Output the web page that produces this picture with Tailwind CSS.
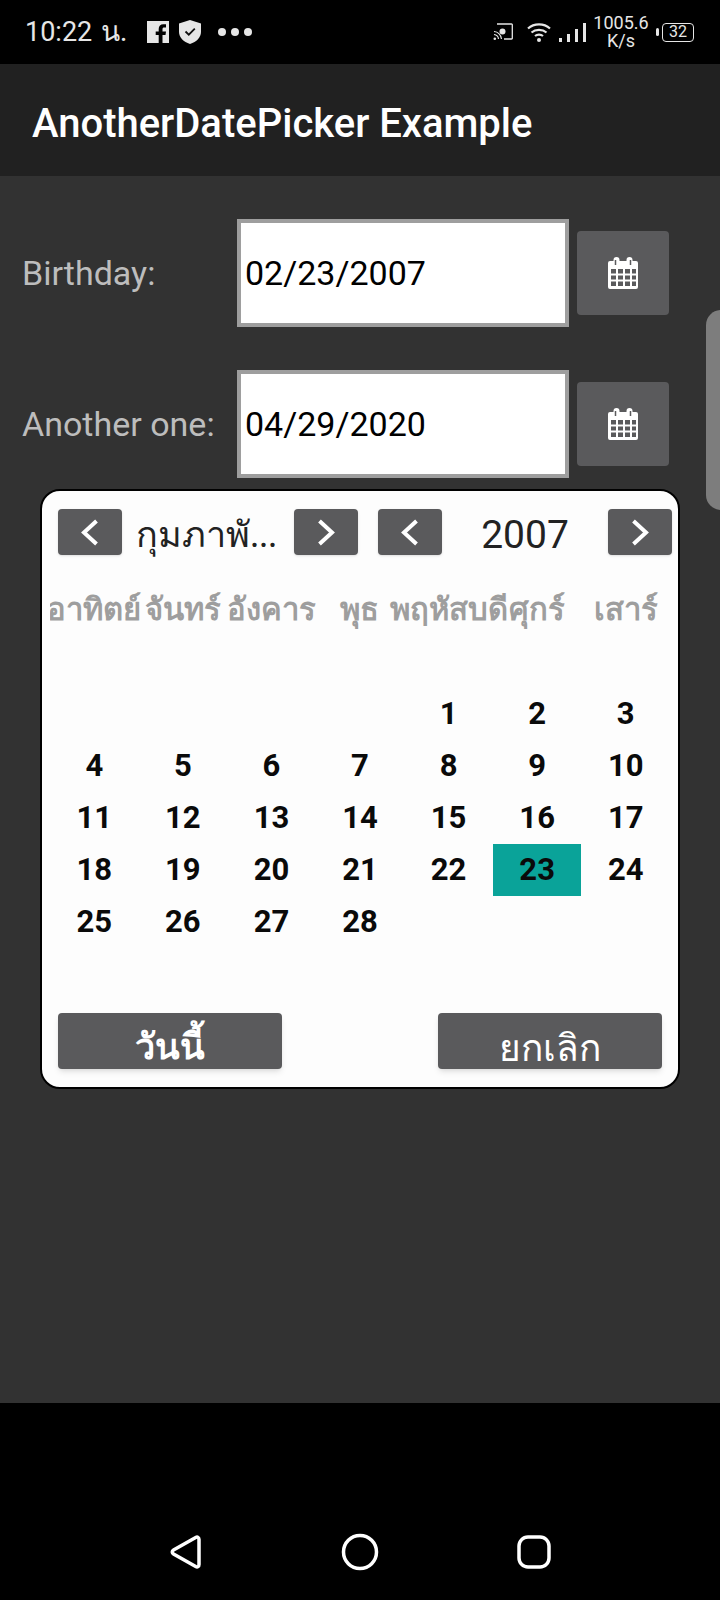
<!DOCTYPE html>
<html lang="th">
<head>
<meta charset="utf-8">
<title>AnotherDatePicker Example</title>
<script src="https://cdn.jsdelivr.net/npm/@tailwindcss/browser@4"></script>
</head>
<body class="bg-black">
<div class="relative flex h-[1600px] w-[720px] flex-col overflow-hidden bg-black font-['Roboto','Noto_Sans',sans-serif]">

  <!-- status bar -->
  <div class="flex h-16 shrink-0 items-center bg-black text-[#e6e6e6]">
    <span class="ml-[25px] w-[122px] whitespace-nowrap text-[27px]">10:22 <span class="ml-[2px] font-['Liberation_Serif',serif] text-[28px]">น.</span></span>
    <svg class="h-[22px] w-[22px]" viewBox="0 0 22 22"><path fill="#e6e6e6" d="M0 0h22v22h-6.500v-8h3l.5-3.600h-3.500V8.300c0-1 .4-1.700 1.800-1.700H19V3.300c-.4 0-1.500-.1-2.700-.1-2.800 0-4.600 1.600-4.600 4.700v2.500H8.700V14h3v8H0z"/></svg>
    <svg class="ml-[10px] h-6 w-[22px]" viewBox="0 0 22 24"><path fill="#e6e6e6" d="M11 0l11 3.400v8.400c0 5.600-4.400 10.200-11 12.200C4.400 22 0 17.400 0 11.800V3.400z"/><path fill="none" stroke="#111" stroke-width="1.800" d="M6.500 11.500l3.300 3.200 6-6"/></svg>
    <div class="ml-[17px] flex gap-[5px]">
      <span class="h-2 w-2 rounded-full bg-[#e6e6e6]"></span>
      <span class="h-2 w-2 rounded-full bg-[#e6e6e6]"></span>
      <span class="h-2 w-2 rounded-full bg-[#e6e6e6]"></span>
    </div>
    <div class="ml-auto flex items-center pr-[26px]">
      <svg class="h-[18px] w-5" viewBox="0 0 20 18"><path fill="none" stroke="#e6e6e6" stroke-width="1.300" d="M4 1h14.500a.8.800 0 0 1 .8.800v13.400a.8.800 0 0 1-.8.800H11"/><path fill="none" stroke="#e6e6e6" stroke-width="1.200" d="M1 8.500a8 8 0 0 1 7.500 7.500M1 11.500a5 5 0 0 1 4.500 4.500"/><circle cx="1.800" cy="15.700" r="1.300" fill="#e6e6e6"/><circle cx="9.500" cy="8.500" r="3" fill="#e6e6e6"/></svg>
      <svg class="ml-[14px] h-5 w-6" viewBox="0 0 24 20"><g fill="none" stroke="#e6e6e6" stroke-width="2.200"><path d="M1 6.500C7 1 17 1 23 6.500"/><path d="M4.500 10.500C8.500 7 15.500 7 19.500 10.500"/><path d="M8 14c2.200-1.800 5.800-1.800 8 0"/></g><circle cx="12" cy="18" r="2" fill="#e6e6e6"/></svg>
      <div class="ml-2 flex h-[19px] items-end gap-[5px]">
        <span class="h-1 w-[3px] bg-[#e6e6e6]"></span>
        <span class="h-2 w-[3px] bg-[#e6e6e6]"></span>
        <span class="h-[13px] w-[3px] bg-[#e6e6e6]"></span>
        <span class="h-[19px] w-[3px] bg-[#e6e6e6]"></span>
      </div>
      <div class="ml-2 mr-px flex w-[54px] flex-col items-center whitespace-nowrap text-[18px] leading-[18px]">
        <span>1005.6</span>
        <span>K/s</span>
      </div>
      <span class="ml-[7px] h-2 w-[3px] rounded-sm bg-[#e6e6e6]"></span>
      <span class="ml-[3px] flex h-[19px] w-8 items-center justify-center rounded-[4px] border-[1.5px] border-[#e6e6e6] text-[16px]">32</span>
    </div>
  </div>

  <!-- app bar -->
  <div class="flex h-28 shrink-0 items-center bg-[#212121] pl-8 pt-2 text-[40px] font-medium text-white">AnotherDatePicker Example</div>

  <!-- main form -->
  <div class="flex flex-1 flex-col gap-[43px] bg-[#323232] pt-[43px]">
    <div class="flex h-[108px] items-center">
      <span class="w-[237px] pl-[22px] text-[34px] text-[#bdbdbd]">Birthday:</span>
      <div class="flex h-[108px] w-[332px] items-center border-4 border-[#9e9e9e] bg-white pl-1 text-[34px] text-black">02/23/2007</div>
      <button class="ml-2 flex h-[84px] w-[92px] items-center justify-center rounded-[4px] bg-[#5a5a5c]">
        <svg class="h-8 w-[30px]" viewBox="0 0 30 32"><use href="#cal"/></svg>
      </button>
    </div>
    <div class="flex h-[108px] items-center">
      <span class="w-[237px] pl-[22px] text-[34px] text-[#bdbdbd]">Another one:</span>
      <div class="flex h-[108px] w-[332px] items-center border-4 border-[#9e9e9e] bg-white pl-1 text-[34px] text-black">04/29/2020</div>
      <button class="ml-2 flex h-[84px] w-[92px] items-center justify-center rounded-[4px] bg-[#5a5a5c]">
        <svg class="h-8 w-[30px]" viewBox="0 0 30 32"><use href="#cal"/></svg>
      </button>
    </div>
  </div>

  <!-- nav bar -->
  <div class="flex h-[197px] shrink-0 items-start justify-center bg-black pt-[130px]">
    <svg class="h-[38px] w-[38px]" viewBox="0 0 38 38"><path fill="none" stroke="#fff" stroke-width="3.500" stroke-linejoin="round" d="M32 6.500c0-2-1.500-3-3.300-2L6.500 17c-1.700 1-1.700 3 0 4l22.200 12.500c1.800 1 3.300 0 3.300-2z"/></svg>
    <svg class="ml-[136px] h-[38px] w-[38px]" viewBox="0 0 38 38"><circle cx="19" cy="19" r="16.500" fill="none" stroke="#fff" stroke-width="3.500"/></svg>
    <svg class="ml-[136px] h-[38px] w-[38px]" viewBox="0 0 38 38"><rect x="4" y="4" width="30" height="30" rx="9" fill="none" stroke="#fff" stroke-width="3.500"/></svg>
  </div>

  <!-- side handle -->
  <div class="absolute left-[706px] top-[310px] h-[200px] w-[30px] rounded-[26px] bg-[#7d7d7d]"></div>

  <!-- date picker dialog -->
  <div class="absolute left-[40px] top-[489px] flex h-[600px] w-[640px] flex-col rounded-[20px] border-2 border-black bg-[#fdfdfd] pt-[18px]">
    <div class="flex h-[46px] items-center pl-4">
      <button class="flex h-[46px] w-16 items-center justify-center rounded-[4px] bg-[#5a5a5c] shadow-sm"><svg class="h-[27px] w-[18px]" viewBox="0 0 18 27"><path fill="none" stroke="#fff" stroke-width="4" d="M15.500 2L3 13.500 15.500 25"/></svg></button>
      <span class="w-[172px] whitespace-nowrap pl-[14px] pt-[6px] font-['Liberation_Serif',serif] text-[36px] leading-[46px] text-[#222]">กุมภาพั...</span>
      <button class="flex h-[46px] w-16 items-center justify-center rounded-[4px] bg-[#5a5a5c] shadow-sm"><svg class="h-[27px] w-[18px]" viewBox="0 0 18 27"><path fill="none" stroke="#fff" stroke-width="4" d="M2.500 2L15 13.500 2.500 25"/></svg></button>
      <button class="ml-5 flex h-[46px] w-16 items-center justify-center rounded-[4px] bg-[#5a5a5c] shadow-sm"><svg class="h-[27px] w-[18px]" viewBox="0 0 18 27"><path fill="none" stroke="#fff" stroke-width="4" d="M15.500 2L3 13.500 15.500 25"/></svg></button>
      <span class="w-[166px] pt-[6px] text-center text-[39px] leading-[46px] text-[#222]">2007</span>
      <button class="flex h-[46px] w-16 items-center justify-center rounded-[4px] bg-[#5a5a5c] shadow-sm"><svg class="h-[27px] w-[18px]" viewBox="0 0 18 27"><path fill="none" stroke="#fff" stroke-width="4" d="M2.500 2L15 13.500 2.500 25"/></svg></button>
    </div>

    <div class="mx-2 mt-[29px] grid h-[52px] grid-cols-7 items-center overflow-hidden font-['Liberation_Serif',serif] text-[31px] font-bold text-[#9e9e9e]">
      <span class="flex justify-center whitespace-nowrap">อาทิตย์</span>
      <span class="flex justify-center whitespace-nowrap">จันทร์</span>
      <span class="flex justify-center whitespace-nowrap">อังคาร</span>
      <span class="flex justify-center whitespace-nowrap">พุธ</span>
      <span class="flex justify-center whitespace-nowrap">พฤหัสบดี</span>
      <span class="flex justify-center whitespace-nowrap">ศุกร์</span>
      <span class="flex justify-center whitespace-nowrap">เสาร์</span>
    </div>

    <div class="mx-2 mt-[52px] grid h-[260px] grid-cols-7 grid-rows-5 text-center text-[31px] font-bold leading-[51px] text-[#0a0a0a]">
      <span></span><span></span><span></span><span></span><span>1</span><span>2</span><span>3</span>
      <span>4</span><span>5</span><span>6</span><span>7</span><span>8</span><span>9</span><span>10</span>
      <span>11</span><span>12</span><span>13</span><span>14</span><span>15</span><span>16</span><span>17</span>
      <span>18</span><span>19</span><span>20</span><span>21</span><span>22</span><span class="bg-[#0aa399]">23</span><span>24</span>
      <span>25</span><span>26</span><span>27</span><span>28</span><span></span><span></span><span></span>
    </div>

    <div class="mt-[65px] flex justify-between pl-4 pr-4">
      <button class="h-14 w-[224px] rounded-[4px] bg-[#5a5a5c] pt-[6px] font-['Liberation_Serif',serif] text-[36px] font-bold leading-[56px] text-white shadow-md">วันนี้</button>
      <button class="h-14 w-[224px] rounded-[4px] bg-[#5a5a5c] pt-[8px] font-['Liberation_Serif',serif] text-[37px] leading-[56px] text-white shadow-md">ยกเลิก</button>
    </div>
  </div>

  <svg class="absolute h-0 w-0">
    <defs>
      <g id="cal">
        <path fill="#fff" d="M2 4h3.500V3a3 3 0 0 1 6 0v1h7V3a3 3 0 0 1 6 0v1H28a2 2 0 0 1 2 2v24a2 2 0 0 1-2 2H2a2 2 0 0 1-2-2V6a2 2 0 0 1 2-2z"/>
        <path fill="none" stroke="#5a5a5c" stroke-width="1.500" d="M7.500 3v5M22.500 3v5"/>
        <g fill="#5a5a5c">
          <rect x="3" y="12" width="5" height="4.500"/><rect x="10" y="12" width="5" height="4.500"/><rect x="17" y="12" width="5" height="4.500"/><rect x="24" y="12" width="4" height="4.500"/>
          <rect x="3" y="18.500" width="5" height="4"/><rect x="10" y="18.500" width="5" height="4"/><rect x="17" y="18.500" width="5" height="4"/><rect x="24" y="18.500" width="4" height="4"/>
          <rect x="3" y="24.500" width="5" height="4.500"/><rect x="10" y="24.500" width="5" height="4.500"/><rect x="17" y="24.500" width="5" height="4.500"/><rect x="24" y="24.500" width="4" height="4.500"/>
        </g>
      </g>
    </defs>
  </svg>
</div>
</body>
</html>
